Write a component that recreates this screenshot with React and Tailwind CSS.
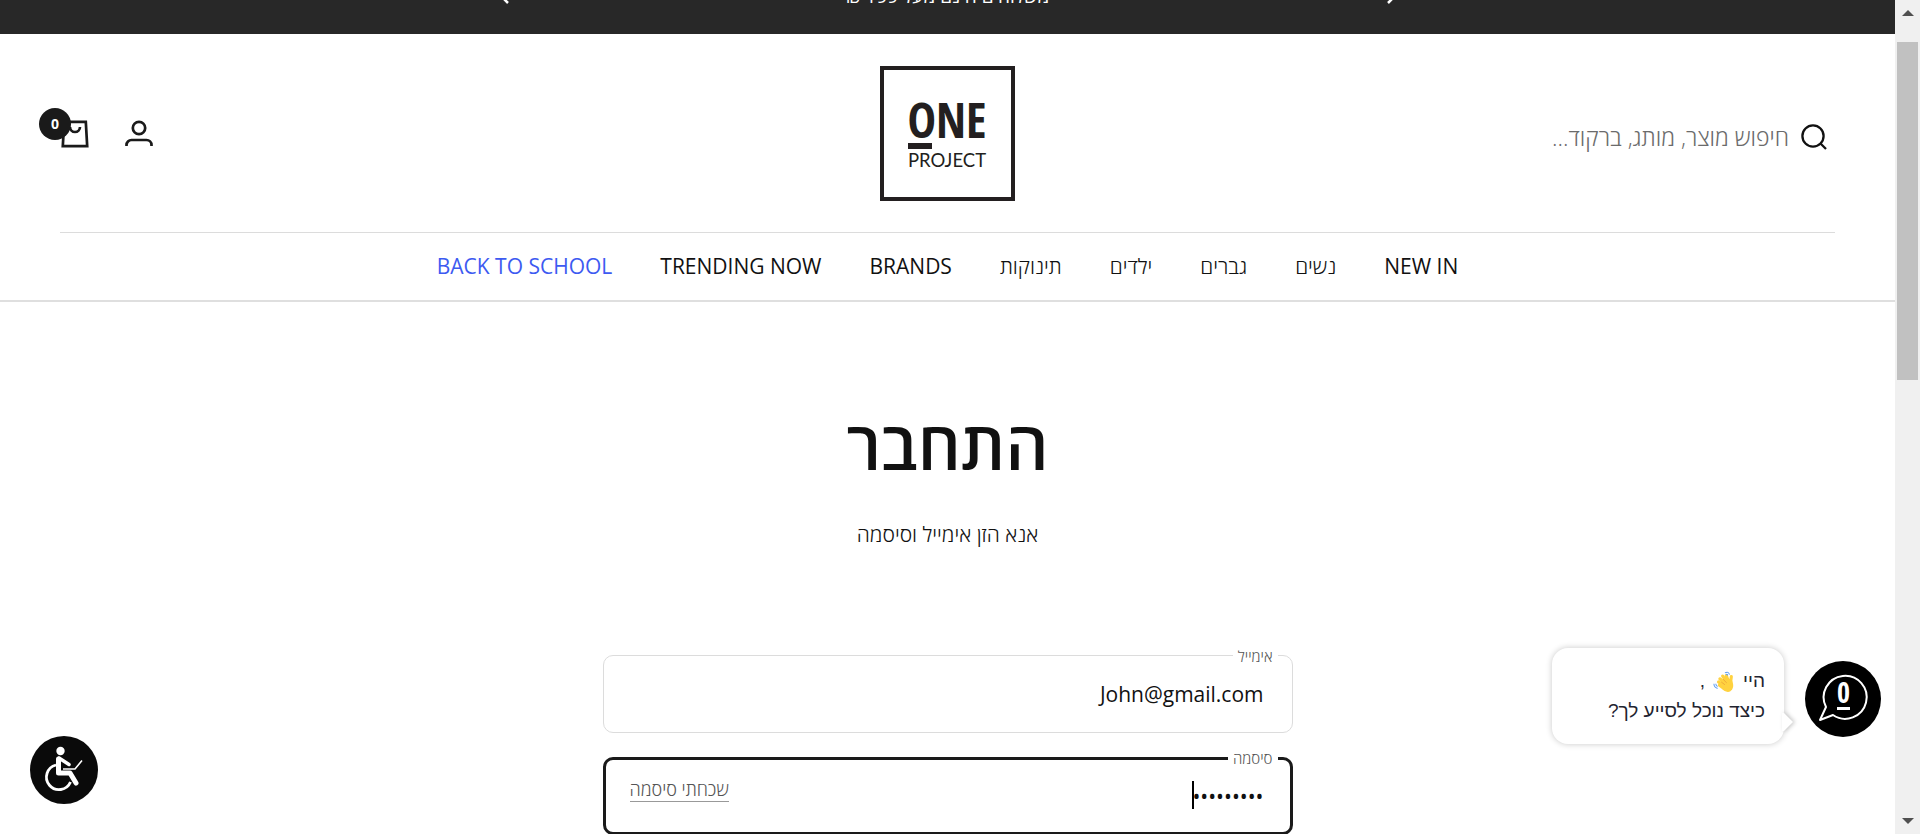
import React from "react";

const navItems = [
  { label: "NEW IN", style: "font-normal text-[#111]" },
  { label: "נשים", style: "font-light text-[#111]" },
  { label: "גברים", style: "font-light text-[#111]" },
  { label: "ילדים", style: "font-light text-[#111]" },
  { label: "תינוקות", style: "font-light text-[#111]" },
  { label: "BRANDS", style: "font-normal text-[#111]" },
  { label: "TRENDING NOW", style: "font-normal text-[#111]" },
  { label: "BACK TO SCHOOL", style: "font-normal text-[#3d5af1]" },
];

function AnnouncementBar() {
  return (
    <div className="h-[34px] overflow-hidden bg-[#282828] text-white">
      <div className="-mt-5 flex items-center justify-center gap-[336px] px-4">
        <button type="button" aria-label="הקודם" className="flex h-8 w-3 items-center">
          <svg viewBox="0 0 12 16" className="h-4 w-3" fill="none" stroke="currentColor" strokeWidth="2.5">
            <path d="M2 1l7 7-7 7" />
          </svg>
        </button>
        <p className="w-[204px] text-center text-[19px] leading-8 whitespace-nowrap">משלוחים חינם מעל 199 ₪</p>
        <button type="button" aria-label="הבא" className="flex h-8 w-3 items-center">
          <svg viewBox="0 0 12 16" className="h-4 w-3" fill="none" stroke="currentColor" strokeWidth="2.5">
            <path d="M10 1L3 8l7 7" />
          </svg>
        </button>
      </div>
    </div>
  );
}

function Logo() {
  return (
    <a href="#home" aria-label="ONE PROJECT" className="block">
      <svg viewBox="0 0 135 135" className="size-[135px]">
        <rect x="2" y="2" width="131" height="131" fill="#fff" stroke="#231f20" strokeWidth="4" />
        <text x="67" y="72" textAnchor="middle" fontFamily="'Noto Sans ExtraCondensed', 'Open Sans Condensed', 'Roboto Condensed', 'Liberation Sans', sans-serif" fontWeight="800" fontSize="48" fill="#231f20">ONE</text>
        <rect x="28" y="77" width="24" height="6" fill="#231f20" />
        <text x="67" y="101" textAnchor="middle" fontFamily="Lato, sans-serif" fontSize="18.500" fill="#231f20">PROJECT</text>
      </svg>
    </a>
  );
}

function Header() {
  return (
    <header className="border-b-2 border-[#dfdfdf]">
      <div className="mx-[60px] grid grid-cols-[1fr_auto_1fr] items-center border-b border-[#dcdcdc] pt-8 pb-[31px]">
        <form role="search" className="flex items-center gap-3 ps-2 pt-[6px]">
          <button type="submit" aria-label="חיפוש">
            <svg viewBox="0 0 26 26" className="size-[26px]" fill="none" stroke="#111" strokeWidth="2.3">
              <circle cx="12" cy="12" r="10.6" />
              <path d="M19 19l6 6" />
            </svg>
          </button>
          <input
            type="text"
            aria-label="חיפוש"
            placeholder="חיפוש מוצר, מותג, ברקוד..."
            className="w-72 text-[23px] leading-8 font-light outline-none placeholder:text-[#6b6b6b]"
          />
        </form>
        <Logo />
        <div className="flex items-center justify-end gap-9 pe-px">
          <a href="#account" aria-label="חשבון">
            <svg viewBox="0 0 28 28" className="size-7" fill="none" stroke="#1a1a1a" strokeWidth="2.7">
              <circle cx="14" cy="8" r="6.2" />
              <path d="M1.5 26v-1a5 5 0 0 1 5-5h15a5 5 0 0 1 5 5v1" />
            </svg>
          </a>
          <a href="#cart" aria-label="סל קניות" className="relative">
            <svg viewBox="0 0 28 28" className="size-7" fill="none" stroke="#1a1a1a" strokeWidth="2.7">
              <path d="M3.2 1.8h21.6l1.4 24.4H1.8z" />
              <path d="M9 7a5 5 0 0 0 10 0" />
            </svg>
            <span className="absolute -top-3 -left-[22px] flex size-8 items-center justify-center rounded-full bg-[#1a1a1a] text-[14px] font-bold text-white">0</span>
          </a>
        </div>
      </div>
      <nav className="flex h-[67px] items-center justify-center gap-12 text-[21px]">
        {navItems.map((item) => (
          <a key={item.label} href="#menu" className={item.style}>
            {item.label}
          </a>
        ))}
      </nav>
    </header>
  );
}

function LoginForm() {
  return (
    <main className="flex flex-col items-center text-[#111]">
      <h1 className="mt-[98px] text-[67px] leading-[88px] font-semibold">התחבר</h1>
      <p className="mt-[30px] text-[21px] leading-8 font-light">אנא הזן אימייל וסיסמה</p>
      <form className="mt-[105px] flex w-full max-w-[690px] flex-col gap-6">
        <div className="relative">
          <input
            id="email"
            type="email"
            dir="rtl"
            defaultValue="John@gmail.com"
            className="h-[78px] w-full rounded-[10px] border border-[#dcdcdc] px-7 text-[21px] outline-none"
          />
          <label htmlFor="email" className="absolute -top-[11px] right-[15px] bg-white px-[5px] text-[15px] leading-6 font-light text-[#555]">
            אימייל
          </label>
        </div>
        <div className="relative">
          <input
            id="password"
            type="password"
            defaultValue="Passw0rd1"
            className="h-[78px] w-full rounded-[10px] border-[3px] border-[#1a1a1a] px-[26px] text-[21px] outline-none"
          />
          <span aria-hidden="true" className="absolute top-6 right-[99px] h-7 w-[2px] bg-black" />
          <label htmlFor="password" className="absolute -top-[11px] right-[15px] bg-white px-[5px] text-[15px] leading-6 font-light text-[#555]">
            סיסמה
          </label>
          <a href="#recover" className="absolute top-[20px] left-[27px] border-b border-[#999] text-[18px] leading-6 font-light text-[#555]">
            שכחתי סיסמה
          </a>
        </div>
      </form>
    </main>
  );
}

function WavingHand() {
  return (
    <svg viewBox="0 0 24 24" className="mx-2 inline size-[22px]" aria-label="👋">
      <g fill="none" stroke="#ffd23f" strokeWidth="3.4" strokeLinecap="round">
        <path d="M15 15L7.5 8.5M13 17l-7-5M16 13l-5.500-7.500M17 12l-2.500-7M19 14l1-8M12 19l-5-3.500" />
      </g>
      <path d="M8 14l8-7 5 4c2 5 1 9-2 11s-8 0-10-4z" fill="#ffd23f" />
      <path d="M9 12l4 3M11 9l4 4" stroke="#eda73a" strokeWidth="1" fill="none" />
      <path d="M13 2q4-2 5 2M14 4q2-1 2 1M1 14q0 4 4 5M3 14q0 2 2 3" stroke="#5b9cf5" strokeWidth="1.100" fill="none" />
    </svg>
  );
}

function ChatWidget() {
  return (
    <div className="absolute right-[14px] bottom-[90px] flex items-end gap-[21px]" dir="ltr">
      <div dir="rtl" className="relative w-[232px] rounded-2xl bg-white px-[19px] py-[18px] font-['Liberation_Sans',sans-serif] text-[19px] leading-[30px] text-[#1f2430] shadow-[0_0_6px_rgba(0,0,0,0.22)]">
        <p>היי<WavingHand />,</p>
        <p className="whitespace-nowrap">כיצד נוכל לסייע לך?</p>
        <svg viewBox="0 0 12 20" className="absolute right-[-10px] bottom-3 h-5 w-3 drop-shadow-[2px_0_2px_rgba(0,0,0,0.22)]">
          <path d="M0 1l2 0 9 9-9 9H0z" fill="#fff" />
        </svg>
      </div>
      <button type="button" aria-label="צ׳אט" className="mb-[7px] rounded-full">
        <svg viewBox="0 0 76 76" className="size-[76px]">
          <circle cx="38" cy="38" r="38" fill="#000" />
          <path d="M15 59l6-13a21.500 21.500 0 1 1 7 8z" fill="none" stroke="#fff" strokeWidth="2" strokeLinejoin="round" />
          <text x="38.500" y="42" textAnchor="middle" fontFamily="'Noto Sans ExtraCondensed', 'Open Sans Condensed', 'Roboto Condensed', 'Liberation Sans', sans-serif" fontWeight="700" fontSize="28" fill="#fff">0</text>
          <rect x="32" y="46" width="13" height="3" fill="#fff" />
        </svg>
      </button>
    </div>
  );
}

function AccessibilityButton() {
  return (
    <button type="button" aria-label="נגישות" className="absolute bottom-[30px] left-[30px] rounded-full">
      <svg viewBox="0 0 68 68" className="size-[68px]" fill="none" stroke="#fff">
        <circle cx="34" cy="34" r="34" fill="#0a0a0a" stroke="none" />
        <circle cx="30.500" cy="15" r="4.200" fill="#fff" stroke="none" />
        <path d="M26 29a12.500 12.500 0 1 0 14.500 17" strokeWidth="2.800" />
        <path d="M28.500 23v14h11.500l6 10" strokeWidth="5" strokeLinecap="round" strokeLinejoin="round" />
        <path d="M29 22l10 6.500" strokeWidth="3.500" strokeLinecap="round" />
        <path d="M33 33h12l7-8.500" strokeWidth="1.600" />
      </svg>
    </button>
  );
}

function ScrollBar() {
  return (
    <div aria-hidden="true" className="flex w-[25px] shrink-0 flex-col items-center bg-[#f0f0f0]">
      <svg viewBox="0 0 12 6" className="mt-[10px] h-[6px] w-3"><path d="M6 0l6 6H0z" fill="#505050" /></svg>
      <div className="mt-[26px] h-[338px] w-[21px] bg-[#c1c1c1]" />
      <svg viewBox="0 0 12 6" className="mt-auto mb-[10px] h-[6px] w-3"><path d="M0 0h12L6 6z" fill="#505050" /></svg>
    </div>
  );
}

export default function App() {
  return (
    <div className="flex h-screen overflow-hidden bg-white font-['Open_Sans',sans-serif]">
      <div dir="rtl" className="relative min-w-0 flex-1 overflow-hidden">
        <AnnouncementBar />
        <Header />
        <LoginForm />
        <ChatWidget />
        <AccessibilityButton />
      </div>
      <ScrollBar />
    </div>
  );
}
